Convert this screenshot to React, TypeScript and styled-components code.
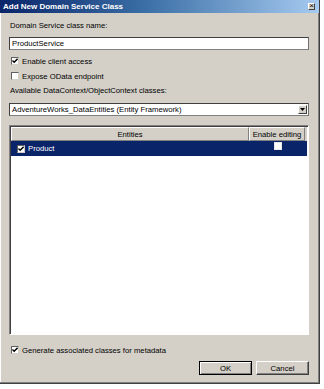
import React from "react";
import styled, { createGlobalStyle } from "styled-components";

const GlobalStyle = createGlobalStyle`
  html, body {
    margin: 0;
    padding: 0;
    background: #ffffff;
  }
  body {
    font-family: "Liberation Sans", Arial, sans-serif;
    font-size: 7.7px;
    color: #000000;
  }
`;

const CheckMark = () => (
  <svg width="6" height="6" viewBox="0 0 7 7">
    <path d="M0.5 3 L2.5 5 L6.5 1" stroke="#000" strokeWidth="1.6" fill="none" />
  </svg>
);

const Check = ({ checked, light }: { checked?: boolean; light?: boolean }) => (
  <CheckBox $light={light}>{checked && <CheckMark />}</CheckBox>
);

export default function App() {
  return (
    <>
      <GlobalStyle />
      <Dialog>
        <TitleBar>
          <TitleText>Add New Domain Service Class</TitleText>
          <CloseButton>×</CloseButton>
        </TitleBar>
        <Body>
          <Label $top={8}>Domain Service class name:</Label>
          <TextBox>ProductService</TextBox>
          <CheckRow $top={6}>
            <Check checked />
            <span>Enable client access</span>
          </CheckRow>
          <CheckRow $top={5}>
            <Check />
            <span>Expose OData endpoint</span>
          </CheckRow>
          <Label $top={5}>Available DataContext/ObjectContext classes:</Label>
          <ComboBox>
            <span>AdventureWorks_DataEntities (Entity Framework)</span>
            <DropButton>
              <svg width="5" height="3" viewBox="0 0 5 3">
                <path d="M0 0 H5 L2.5 3 Z" fill="#000" />
              </svg>
            </DropButton>
          </ComboBox>
          <Grid>
            <HeaderRow>
              <HeaderCell>Entities</HeaderCell>
              <HeaderCell $narrow>Enable editing</HeaderCell>
            </HeaderRow>
            <SelectedRow>
              <EntityCell>
                <Check checked />
                <span>Product</span>
              </EntityCell>
              <EditCell>
                <Check light />
              </EditCell>
            </SelectedRow>
          </Grid>
          <CheckRow $top={10}>
            <Check checked />
            <span>Generate associated classes for metadata</span>
          </CheckRow>
          <ButtonRow>
            <Button $default>OK</Button>
            <Button>Cancel</Button>
          </ButtonRow>
        </Body>
      </Dialog>
    </>
  );
}

const Dialog = styled.div`
  width: 320px;
  height: 384px;
  box-sizing: border-box;
  background: #d4d0c8;
  border-right: 1px solid #404040;
  border-bottom: 1px solid #404040;
  box-shadow: inset -1px -1px 0 #808080, inset 1px 1px 0 #ffffff;
  display: flex;
  flex-direction: column;
`;

const TitleBar = styled.div`
  height: 13px;
  display: flex;
  align-items: center;
  justify-content: space-between;
  padding: 0 4px 0 3px;
  background: linear-gradient(to right, #0a246a 0%, #3a6ea5 45%, #a6caf0 100%);
`;

const TitleText = styled.span`
  color: #ffffff;
  font-weight: bold;
  font-size: 8px;
`;

const CloseButton = styled.div`
  width: 7px;
  height: 7px;
  box-sizing: border-box;
  background: #d4d0c8;
  border: 1px solid;
  border-color: #ffffff #404040 #404040 #ffffff;
  font-size: 8px;
  line-height: 4px;
  text-align: center;
  color: #000;
`;

const Body = styled.div`
  display: flex;
  flex-direction: column;
  padding: 0 10px 0 9px;
`;

const Label = styled.div<{ $top: number }>`
  margin-top: ${(p) => p.$top}px;
  height: 10px;
  line-height: 10px;
  padding-left: 1px;
`;

const TextBox = styled.div`
  margin-top: 6px;
  height: 13px;
  box-sizing: border-box;
  background: #ffffff;
  border: 1px solid;
  border-color: #404040 #707070 #808080 #404040;
  line-height: 11px;
  padding-left: 2px;
`;

const CheckRow = styled.div<{ $top: number }>`
  margin-top: ${(p) => p.$top}px;
  height: 10px;
  display: flex;
  align-items: center;
  gap: 3px;
  padding-left: 2px;
`;

const CheckBox = styled.span<{ $light?: boolean }>`
  width: 8px;
  height: 8px;
  box-sizing: border-box;
  background: #ffffff;
  border: 1px solid;
  border-color: ${(p) =>
    p.$light ? "#e8e8e8" : "#606060 #d4d0c8 #d4d0c8 #606060"};
  display: flex;
  align-items: center;
  justify-content: center;
  flex-shrink: 0;
`;

const ComboBox = styled.div`
  margin-top: 7px;
  height: 13px;
  box-sizing: border-box;
  background: #ffffff;
  border: 1px solid;
  border-color: #404040 #707070 #808080 #404040;
  display: flex;
  align-items: center;
  justify-content: space-between;
  padding-left: 2px;
`;

const DropButton = styled.div`
  width: 9px;
  height: 9px;
  margin-right: 1px;
  box-sizing: border-box;
  background: #d4d0c8;
  border: 1px solid;
  border-color: #ffffff #404040 #404040 #ffffff;
  display: flex;
  align-items: center;
  justify-content: center;
`;

const Grid = styled.div`
  margin-top: 9px;
  height: 210px;
  box-sizing: border-box;
  background: #ffffff;
  border: 1px solid;
  border-color: #808080 #ffffff #ffffff #808080;
  box-shadow: inset 1px 1px 0 #404040;
  padding: 1px 1px 0 1px;
  display: flex;
  flex-direction: column;
`;

const HeaderRow = styled.div`
  height: 14px;
  display: flex;
  background: #d4d0c8;
  padding-right: 2px;
`;

const HeaderCell = styled.div<{ $narrow?: boolean }>`
  ${(p) => (p.$narrow ? "width: 56px;" : "flex: 1;")}
  box-sizing: border-box;
  border: 1px solid;
  border-color: #ffffff #808080 #808080 #ffffff;
  display: flex;
  align-items: center;
  justify-content: center;
`;

const SelectedRow = styled.div`
  height: 15px;
  display: flex;
  background: #0a246a;
  color: #ffffff;
`;

const EntityCell = styled.div`
  flex: 1;
  display: flex;
  align-items: center;
  gap: 3px;
  padding-left: 6px;
`;

const EditCell = styled.div`
  width: 58px;
  display: flex;
  justify-content: center;
  padding-top: 1px;
`;

const ButtonRow = styled.div`
  margin-top: 6px;
  display: flex;
  justify-content: flex-end;
  gap: 4px;
`;

const Button = styled.div<{ $default?: boolean }>`
  width: 53px;
  height: 14px;
  box-sizing: border-box;
  border: 1px solid;
  border-color: ${(p) =>
    p.$default ? "#000000" : "#ffffff #404040 #404040 #ffffff"};
  box-shadow: ${(p) =>
    p.$default
      ? "inset 1px 1px 0 #ffffff, inset -1px -1px 0 #808080"
      : "inset -1px -1px 0 #808080"};
  display: flex;
  align-items: center;
  justify-content: center;
`;
